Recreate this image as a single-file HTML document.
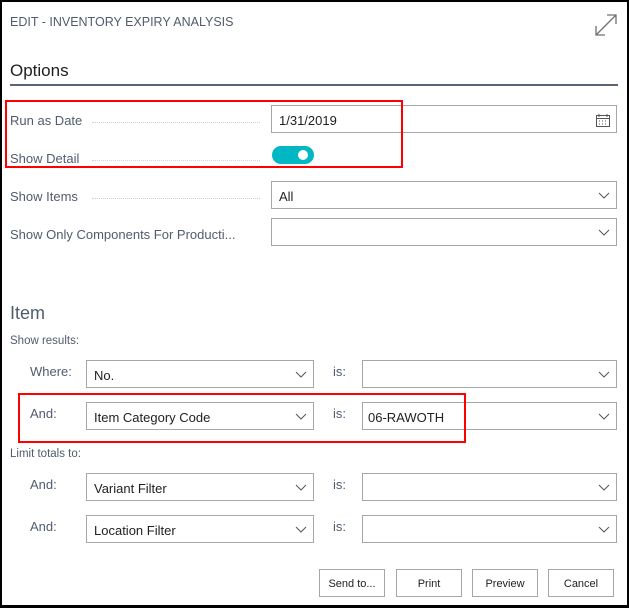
<!DOCTYPE html>
<html><head><meta charset="utf-8"><style>
*{margin:0;padding:0;box-sizing:border-box}
body{width:629px;height:608px;background:#000;font-family:"Liberation Sans",sans-serif;position:relative;overflow:hidden}
#p{position:absolute;left:2px;top:2px;width:625px;height:603px;background:#fff}
.a{position:absolute}
.lbl{position:absolute;left:10px;font-size:13px;color:#505c6d}
.dots{position:absolute;border-bottom:1px dotted #d0d0d0;height:1px}
.in{position:absolute;border:1px solid #a6a6a6;background:#fff;font-size:13px;color:#212121;padding-left:7px;line-height:26px;padding-top:2px}
.chev{position:absolute;right:6px;top:10px}
.sl{position:absolute;font-size:13px;color:#505c6d}
.btn{position:absolute;top:569px;height:28px;border:1px solid #a6a6a6;font-size:11px;color:#212121;text-align:center;line-height:28px;width:66px}
.red{position:absolute;border:2px solid #f00}
</style></head><body>
<div id="p"></div>
<div class="a" style="left:10px;top:15px;font-size:12.5px;color:#505c6d">EDIT - INVENTORY EXPIRY ANALYSIS</div>
<svg class="a" style="left:594px;top:13px" width="24" height="24" viewBox="0 0 24 24" fill="none" stroke="#707070" stroke-width="1.3"><path d="M2 22L22 2M13 2H22V11M2 13V22H11"/></svg>
<div class="a" style="left:10px;top:61px;font-size:17px;color:#212121">Options</div>
<div class="a" style="left:10px;top:84px;width:608px;height:2px;background:#5a6474"></div>

<div class="lbl" style="top:113px">Run as Date</div><div class="dots" style="left:92px;top:122px;width:168px"></div>
<div class="in" style="left:271px;top:105px;width:346px;height:28px">1/31/2019
<svg class="a" style="right:6px;top:7px" width="14" height="14" viewBox="0 0 14 14" fill="none" stroke="#555" stroke-width="1"><rect x="0.5" y="2.5" width="13" height="11"/><path d="M0.5 5.5H13.5M3 1V4M11 1V4M3 8h1M6 8h1M9 8h1M3 11h1M6 11h1M9 11h1"/></svg></div>
<div class="lbl" style="top:151px">Show Detail</div><div class="dots" style="left:92px;top:160px;width:168px"></div>
<div class="a" style="left:272px;top:146px;width:42px;height:18px;border-radius:9px;background:#00b7c3"></div>
<div class="a" style="left:298px;top:150px;width:10px;height:10px;border-radius:5px;background:#fff"></div>
<div class="red" style="left:5px;top:100px;width:398px;height:68px"></div>

<div class="lbl" style="top:189px">Show Items</div><div class="dots" style="left:92px;top:198px;width:168px"></div>
<div class="in" style="left:271px;top:181px;width:346px;height:28px">All<svg class="chev" width="12" height="8"><path d="M1 1L6 6L11 1" stroke="#555" fill="none"/></svg></div>
<div class="lbl" style="top:227px">Show Only Components For Producti...</div>
<div class="in" style="left:271px;top:218px;width:346px;height:28px"><svg class="chev" width="12" height="8"><path d="M1 1L6 6L11 1" stroke="#555" fill="none"/></svg></div>

<div class="a" style="left:10px;top:303px;font-size:18px;color:#505c6d">Item</div>
<div class="a" style="left:10px;top:335px;font-size:11.5px;color:#505c6d">Show results:</div>

<div class="sl" style="left:30px;top:364px">Where:</div>
<div class="in" style="left:86px;top:360px;width:228px;height:28px">No.<svg class="chev" width="12" height="8"><path d="M1 1L6 6L11 1" stroke="#555" fill="none"/></svg></div>
<div class="sl" style="left:333px;top:364px">is:</div>
<div class="in" style="left:362px;top:360px;width:255px;height:28px"><svg class="chev" width="12" height="8"><path d="M1 1L6 6L11 1" stroke="#555" fill="none"/></svg></div>

<div class="sl" style="left:30px;top:406px">And:</div>
<div class="in" style="left:86px;top:402px;width:228px;height:28px">Item Category Code<svg class="chev" width="12" height="8"><path d="M1 1L6 6L11 1" stroke="#555" fill="none"/></svg></div>
<div class="sl" style="left:333px;top:406px">is:</div>
<div class="in" style="left:362px;top:402px;width:255px;height:28px;padding-left:5px">06-RAWOTH<svg class="chev" width="12" height="8"><path d="M1 1L6 6L11 1" stroke="#555" fill="none"/></svg></div>
<div class="red" style="left:18px;top:393px;width:448px;height:50px"></div>

<div class="a" style="left:10px;top:448px;font-size:11.5px;color:#505c6d">Limit totals to:</div>

<div class="sl" style="left:30px;top:477px">And:</div>
<div class="in" style="left:86px;top:473px;width:228px;height:28px">Variant Filter<svg class="chev" width="12" height="8"><path d="M1 1L6 6L11 1" stroke="#555" fill="none"/></svg></div>
<div class="sl" style="left:333px;top:477px">is:</div>
<div class="in" style="left:362px;top:473px;width:255px;height:28px"><svg class="chev" width="12" height="8"><path d="M1 1L6 6L11 1" stroke="#555" fill="none"/></svg></div>

<div class="sl" style="left:30px;top:519px">And:</div>
<div class="in" style="left:86px;top:515px;width:228px;height:28px">Location Filter<svg class="chev" width="12" height="8"><path d="M1 1L6 6L11 1" stroke="#555" fill="none"/></svg></div>
<div class="sl" style="left:333px;top:519px">is:</div>
<div class="in" style="left:362px;top:515px;width:255px;height:28px"><svg class="chev" width="12" height="8"><path d="M1 1L6 6L11 1" stroke="#555" fill="none"/></svg></div>

<div class="btn" style="left:319px">Send to...</div>
<div class="btn" style="left:396px">Print</div>
<div class="btn" style="left:472px">Preview</div>
<div class="btn" style="left:548px">Cancel</div>
</body></html>
